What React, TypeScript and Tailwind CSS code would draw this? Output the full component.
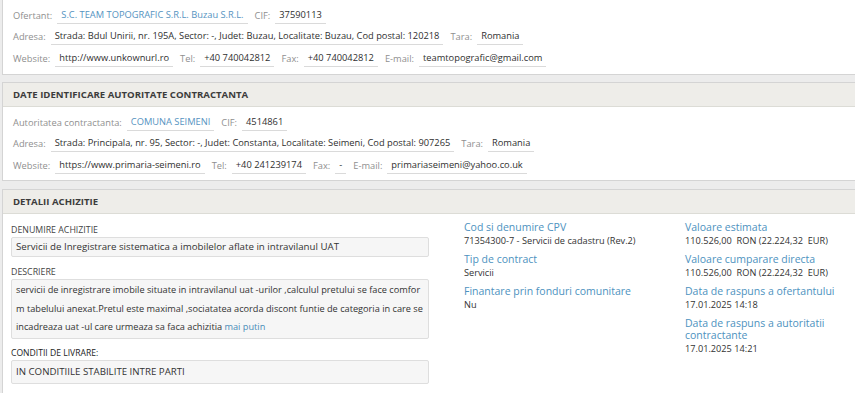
import { ReactNode } from 'react';

type Field = {
  label: string;
  value: string;
  link?: boolean;
};

const ofertantRows: Field[][] = [
  [
    { label: 'Ofertant:', value: 'S.C. TEAM TOPOGRAFIC S.R.L. Buzau S.R.L.', link: true },
    { label: 'CIF:', value: '37590113' },
  ],
  [
    {
      label: 'Adresa:',
      value: 'Strada: Bdul Unirii, nr. 195A, Sector: -, Judet: Buzau, Localitate: Buzau, Cod postal: 120218',
    },
    { label: 'Tara:', value: 'Romania' },
  ],
  [
    { label: 'Website:', value: 'http://www.unkownurl.ro' },
    { label: 'Tel:', value: '+40 740042812' },
    { label: 'Fax:', value: '+40 740042812' },
    { label: 'E-mail:', value: 'teamtopografic@gmail.com' },
  ],
];

const autoritateRows: Field[][] = [
  [
    { label: 'Autoritatea contractanta:', value: 'COMUNA SEIMENI', link: true },
    { label: 'CIF:', value: '4514861' },
  ],
  [
    {
      label: 'Adresa:',
      value: 'Strada: Principala, nr. 95, Sector: -, Judet: Constanta, Localitate: Seimeni, Cod postal: 907265',
    },
    { label: 'Tara:', value: 'Romania' },
  ],
  [
    { label: 'Website:', value: 'https://www.primaria-seimeni.ro' },
    { label: 'Tel:', value: '+40 241239174' },
    { label: 'Fax:', value: '-' },
    { label: 'E-mail:', value: 'primariaseimeni@yahoo.co.uk' },
  ],
];

const FieldRows = ({ rows }: { rows: Field[][] }) => (
  <div className="flex flex-col">
    {rows.map((row, i) => (
      <div key={i} className="flex h-[21.5px] items-center gap-[7px] text-[9.3px]">
        {row.map(f => (
          <div key={f.label} className="flex items-center gap-[5px]">
            <span className="text-[#8f8f8f]">{f.label}</span>
            <span
              className={
                f.link
                  ? 'border-b border-[#dadada] px-[4px] pb-[1px] text-[#5593bf]'
                  : 'border-b border-[#dadada] px-[4px] pb-[1px] text-[#2f2f2f]'
              }
            >
              {f.value}
            </span>
          </div>
        ))}
      </div>
    ))}
  </div>
);

const PanelHeader = ({ children }: { children: ReactNode }) => (
  <div className="flex h-[24px] items-center border-b border-[#dcdcd6] bg-[#eeede9] px-[10px] text-[9.6px] font-bold text-[#3c3c3c]">
    {children}
  </div>
);

const InfoItem = ({ title, value }: { title: string; value: string }) => (
  <div className="flex flex-col">
    <span className="text-[10.5px] leading-[12px] text-[#4d92c0]">{title}</span>
    <span className="mt-[1px] text-[9.2px] leading-[13px] whitespace-pre-wrap text-[#333]">{value}</span>
  </div>
);

export default function App() {
  return (
    <div className="min-h-screen bg-[#ececec] pl-[2px] font-['Open_Sans',sans-serif] text-[10px] leading-[14px]">
      {/* Ofertant */}
      <div className="h-[75px] border-b border-l border-[#d4d4d4] bg-white pl-[10px] pt-[5px]">
        <FieldRows rows={ofertantRows} />
      </div>

      {/* Autoritate contractanta */}
      <div className="mt-[7px] h-[99px] border-y border-l border-[#d4d4d4] bg-white">
        <PanelHeader>DATE IDENTIFICARE AUTORITATE CONTRACTANTA</PanelHeader>
        <div className="pl-[10px] pt-[5px]">
          <FieldRows rows={autoritateRows} />
        </div>
      </div>

      {/* Detalii achizitie */}
      <div className="mt-[8px] h-[220px] border-t border-l border-[#d4d4d4] bg-white">
        <PanelHeader>DETALII ACHIZITIE</PanelHeader>
        <div className="flex pl-[8px] pt-[7px]">
          <div className="flex w-[418px] flex-col pt-[3px]">
            <span className="text-[8.8px] leading-[12px] text-[#444]">DENUMIRE ACHIZITIE</span>
            <div className="mt-[1px] flex h-[20px] items-center rounded-[2px] border border-[#dedede] bg-[#f6f6f6] px-[4px] text-[9.7px] text-[#333]">
              Servicii de Inregistrare sistematica a imobilelor aflate in intravilanul UAT
            </div>

            <span className="mt-[9px] text-[8.8px] leading-[12px] text-[#444]">DESCRIERE</span>
            <div className="mt-[1px] rounded-[2px] border border-[#dedede] bg-[#f6f6f6] px-[4px] py-[1px] text-[9.2px] leading-[18.5px] break-all text-[#333]">
              servicii de inregistrare imobile situate in intravilanul uat -urilor ,calculul pretului se face comform tabelului anexat.Pretul este maximal ,sociatatea acorda discont funtie de categoria in care se incadreaza uat -ul care urmeaza sa faca achizitia{' '}
              <span className="text-[#4a8db8]">mai putin</span>
            </div>

            <span className="mt-[8px] text-[8.6px] leading-[12px] text-[#222]">CONDITII DE LIVRARE:</span>
            <div className="mt-[1px] flex h-[24px] items-center rounded-[2px] border border-[#dedede] bg-[#f6f6f6] px-[4px] text-[9.7px] text-[#333]">
              IN CONDITIILE STABILITE INTRE PARTI
            </div>
          </div>

          <div className="ml-[35px] flex w-[190px] flex-col gap-[6px]">
            <InfoItem title="Cod si denumire CPV" value="71354300-7 - Servicii de cadastru (Rev.2)" />
            <InfoItem title="Tip de contract" value="Servicii" />
            <InfoItem title="Finantare prin fonduri comunitare" value="Nu" />
          </div>

          <div className="ml-[31px] flex w-[160px] flex-col gap-[6px]">
            <InfoItem title="Valoare estimata" value="110.526,00  RON (22.224,32  EUR)" />
            <InfoItem title="Valoare cumparare directa" value="110.526,00  RON (22.224,32  EUR)" />
            <InfoItem title="Data de raspuns a ofertantului" value="17.01.2025 14:18" />
            <InfoItem title="Data de raspuns a autoritatii contractante" value="17.01.2025 14:21" />
          </div>
        </div>
      </div>
    </div>
  );
}
